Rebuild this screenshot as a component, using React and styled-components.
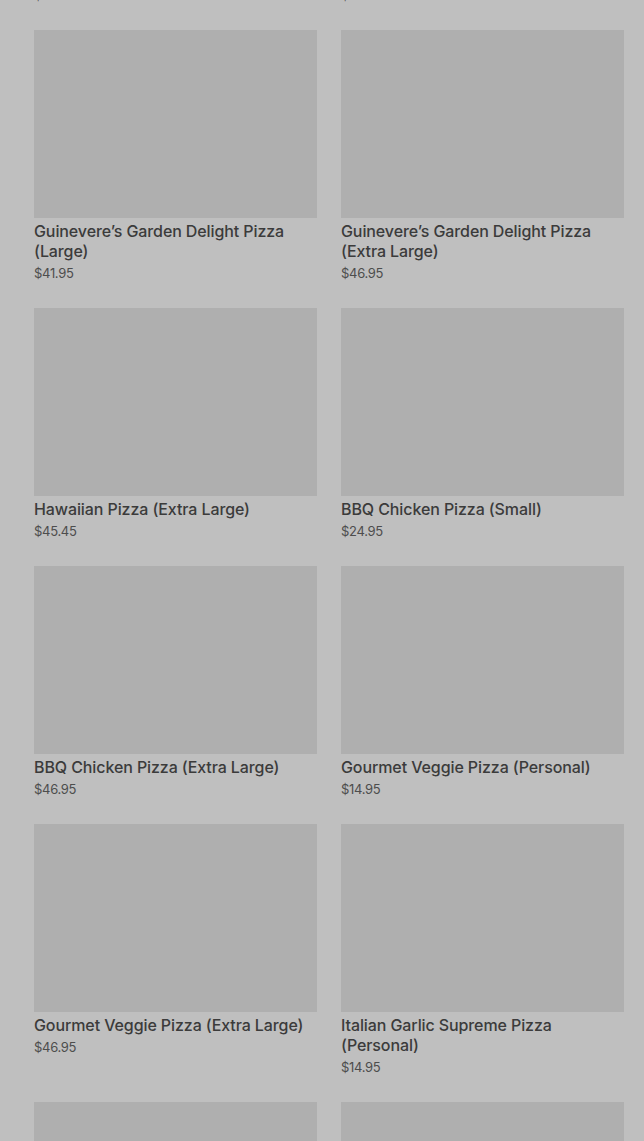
import styled, { createGlobalStyle } from "styled-components";

const GlobalStyle = createGlobalStyle`
  html, body {
    margin: 0;
    background: #bfbfbf;
    overflow: hidden;
  }
  body {
    font-family: Inter, "Noto Sans", "Liberation Sans", sans-serif;
  }
`;

const products = [
  { name: "Hawaiian Pizza (Large)", price: "$24.95" },
  { name: "BBQ Chicken Pizza (Large)", price: "$32.95" },
  { name: "Guinevere’s Garden Delight Pizza (Large)", price: "$41.95" },
  { name: "Guinevere’s Garden Delight Pizza (Extra Large)", price: "$46.95" },
  { name: "Hawaiian Pizza (Extra Large)", price: "$45.45" },
  { name: "BBQ Chicken Pizza (Small)", price: "$24.95" },
  { name: "BBQ Chicken Pizza (Extra Large)", price: "$46.95" },
  { name: "Gourmet Veggie Pizza (Personal)", price: "$14.95" },
  { name: "Gourmet Veggie Pizza (Extra Large)", price: "$46.95" },
  { name: "Italian Garlic Supreme Pizza (Personal)", price: "$14.95" },
  { name: "Italian Garlic Supreme Pizza (Small)", price: "$19.95" },
  { name: "Italian Garlic Supreme Pizza (Large)", price: "$36.95" },
];

export default function App() {
  return (
    <>
      <GlobalStyle />
      <Page>
        <Grid>
          {products.map((p, i) => (
            <Card key={i}>
              <Thumb />
              <Title>{p.name}</Title>
              <Price>{p.price}</Price>
            </Card>
          ))}
        </Grid>
      </Page>
    </>
  );
}

const Page = styled.div`
  height: 1141px;
  overflow: hidden;
`;

const Grid = styled.div`
  display: grid;
  grid-template-columns: 283px 283px;
  column-gap: 24px;
  row-gap: 25px;
  align-items: start;
  padding: 0 20px 0 34px;
  margin-top: -228px;
`;

const Card = styled.div`
  display: flex;
  flex-direction: column;
`;

const Thumb = styled.div`
  height: 188px;
  background: #afafaf;
  margin-bottom: 3px;
`;

const Title = styled.div`
  font-size: 16px;
  line-height: 20px;
  font-weight: 500;
  letter-spacing: -0.1px;
  color: #3b3b3b;
  margin-bottom: 2px;
`;

const Price = styled.div`
  font-size: 13px;
  line-height: 20px;
  font-weight: 400;
  letter-spacing: -0.3px;
  color: #4d4d4d;
`;
